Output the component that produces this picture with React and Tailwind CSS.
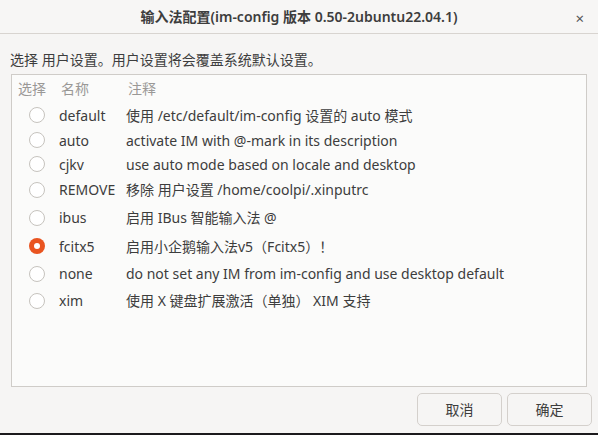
import React from 'react';

const rows = [
  { name: 'default', note: '使用 /etc/default/im-config 设置的 auto 模式', h: 'h-[26px]' },
  { name: 'auto', note: 'activate IM with @-mark in its description', h: 'h-[24px]' },
  { name: 'cjkv', note: 'use auto mode based on locale and desktop', h: 'h-[24px]' },
  { name: 'REMOVE', note: '移除 用户设置 /home/coolpi/.xinputrc', h: 'h-[27px]' },
  { name: 'ibus', note: '启用 IBus 智能输入法 @', h: 'h-[29px]' },
  { name: 'fcitx5', note: '启用小企鹅输入法v5（Fcitx5）！', h: 'h-[28px]', on: true },
  { name: 'none', note: 'do not set any IM from im-config and use desktop default', h: 'h-[27px]' },
  { name: 'xim', note: '使用 X 键盘扩展激活（单独） XIM 支持', h: 'h-[27px]' },
];

function Radio({ on }) {
  if (on) {
    return (
      <div className="w-4 h-4 rounded-full bg-[#e95420] flex items-center justify-center">
        <div className="w-[6px] h-[6px] rounded-full bg-white" />
      </div>
    );
  }
  return <div className="w-4 h-4 rounded-full border border-[#c6c3be] bg-white" />;
}

export default function App() {
  return (
    <div
      className="w-[598px] h-[435px] bg-[#f6f5f4] text-[#3d3d3d] flex flex-col overflow-hidden"
      style={{ fontFamily: '"Noto Sans", "Noto Sans CJK SC", sans-serif' }}
    >
      <div className="h-[34px] shrink-0 border-b border-[#d8d4d0] bg-[#f7f6f5] relative flex items-center justify-center">
        <span className="text-[14px] font-semibold text-[#3d3d3d]">输入法配置(im-config 版本 0.50-2ubuntu22.04.1)</span>
        <span className="absolute right-[14px] top-[7px] text-[15px] text-[#555]">×</span>
      </div>
      <div className="h-[40px] shrink-0 pl-[10px] flex items-center pt-[10px] text-[14px]">
        选择 用户设置。用户设置将会覆盖系统默认设置。
      </div>
      <div className="mx-[11px] h-[313px] shrink-0 border border-[#cfccc8] bg-[#fbfbfa] text-[14px]">
        <div className="h-[27px] flex items-center text-[#9a9896]">
          <span className="pl-[6px] w-[49px]">选择</span>
          <span className="w-[67px]">名称</span>
          <span>注释</span>
        </div>
        {rows.map((r) => (
          <div key={r.name} className={`${r.h} flex items-center`}>
            <div className="w-[47px] flex justify-center pl-[2px]">
              <Radio on={r.on} />
            </div>
            <span className="w-[67px] whitespace-nowrap">{r.name}</span>
            <span className="whitespace-nowrap">{r.note}</span>
          </div>
        ))}
      </div>
      <div className="flex justify-end gap-[5px] pr-[6px] pt-[6px]">
        <button className="w-[85px] h-[33px] rounded-[5px] border border-[#d4d0cc] bg-[#f6f5f4] text-[14px] text-[#3d3d3d]">取消</button>
        <button className="w-[85px] h-[33px] rounded-[5px] border border-[#d4d0cc] bg-[#f6f5f4] text-[14px] text-[#3d3d3d]">确定</button>
      </div>
      <div className="mt-auto h-[2px] bg-[#1c1a1d]" />
    </div>
  );
}
